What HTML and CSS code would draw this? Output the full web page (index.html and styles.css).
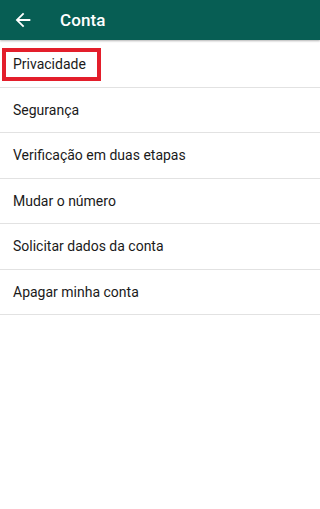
FILE: index.html
```html
<!DOCTYPE html>
<html lang="pt">
<head>
<meta charset="utf-8">
<title>Conta</title>
<link rel="stylesheet" href="styles.css">
</head>
<body>
<header class="appbar">
  <svg class="back" viewBox="0 0 24 24" width="22" height="22" aria-hidden="true">
    <path d="M20 11H7.830l5.590-5.590L12 4l-8 8 8 8 1.410-1.410L7.830 13H20v-2z" fill="#fff"/>
  </svg>
  <h1 class="title">Conta</h1>
</header>
<ul class="list">
  <li class="item">Privacidade<span class="highlight"></span></li>
  <li class="item">Segurança</li>
  <li class="item">Verificação em duas etapas</li>
  <li class="item">Mudar o número</li>
  <li class="item">Solicitar dados da conta</li>
  <li class="item">Apagar minha conta</li>
</ul>
</body>
</html>
```
FILE: styles.css
```css
html, body {
  margin: 0;
  padding: 0;
  background: #ffffff;
  font-family: Roboto, "Noto Sans", sans-serif;
}
.appbar {
  height: 40px;
  background: #075e54;
  display: flex;
  align-items: center;
  box-shadow: 0 1px 2px rgba(0, 0, 0, 0.3);
  position: relative;
  z-index: 1;
}
.back {
  margin-left: 12px;
  margin-top: -1px;
  display: block;
}
.title {
  margin: 0 0 0 26px;
  color: #ffffff;
  font-size: 17px;
  font-weight: 500;
  letter-spacing: 0.1px;
}
.list {
  list-style: none;
  margin: 0;
  padding: 0;
  padding-top: 2px;
}
.item {
  position: relative;
  height: 44.5px;
  display: flex;
  align-items: center;
  padding-left: 13px;
  font-size: 14px;
  color: #1a1a1a;
  border-bottom: 1px solid #e2e2e2;
}
.highlight {
  position: absolute;
  left: 2px;
  top: 6px;
  width: 91px;
  height: 25px;
  border: 4px solid #e31e2b;
}
```
